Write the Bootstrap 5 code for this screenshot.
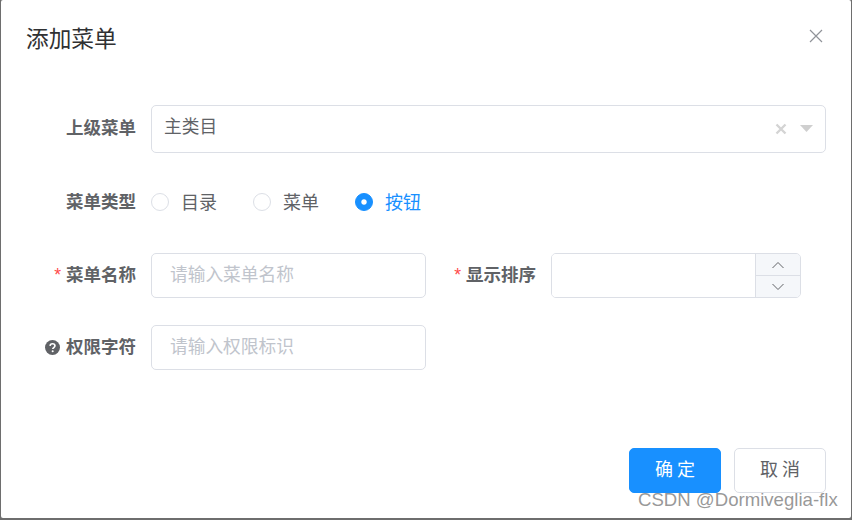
<!DOCTYPE html>
<html lang="zh-CN">
<head>
  <meta charset="UTF-8">
  <meta name="viewport" content="width=device-width, initial-scale=1.0">
  <title>添加菜单</title>
  <link rel="stylesheet" href="https://cdn.jsdelivr.net/npm/bootstrap@5.3.3/dist/css/bootstrap.min.css">
  <style>
    html, body { height: 520px; overflow: hidden; }
    body {
      background: #6e6e6e;
      padding: 0 1px 2px 1px;
      font-family: "Liberation Sans", "Noto Sans CJK SC", sans-serif;
      font-size: 17.5px;
      color: #606266;
    }
    .dlg { height: 518px; border: 0; border-radius: 2px; position: relative; background: #fff; }
    .dlg-head { height: 78px; padding: 0 25px; }
    .dlg-title { font-size: 22.7px; font-weight: 400; color: #303133; margin: 0; padding-top: 2px; }
    .dlg-close { background: none; border: 0; padding: 0; width: 16px; height: 16px; margin-right: 2px; margin-top: -6px; display: flex; }
    .dlg-form { padding: 27px 25px 0 25px; }
    .form-line { display: flex; align-items: center; }
    .form-line.line-select { height: 48px; margin-bottom: 25px; }
    .form-line.line-radio { height: 48px; margin-bottom: 27px; }
    .form-line.line-radio .lbl { padding-top: 2px; }
    .form-line.line-input { height: 45px; margin-bottom: 27px; }
    .lbl {
      width: 125px; flex: none; padding-right: 15px; margin: 0;
      display: flex; align-items: center; justify-content: flex-end; gap: 6px;
      font-weight: 700; color: #606266; line-height: 1;
    }
    .req { color: #ff4949; font-weight: 400; font-size: 17.5px; margin-right: -1px; }
    .sel-box {
      flex: 1; height: 48px; padding: 0 12px 0 13px;
      border: 1px solid #dcdfe6; border-radius: 5px; color: #606266;
    }
    .sel-text { margin-top: -3px; margin-left: -1px; font-size: 17.7px; }
    .sel-icons { gap: 13px; }
    .radio-item { display: flex; align-items: center; margin-right: 36px; gap: 12px; font-size: 18px; }
    .radio-item .form-check-input {
      width: 18px; height: 18px; margin: 0; border: 1px solid #dcdfe6; flex: none;
    }
    .radio-item .form-check-input:checked {
      background-color: #1890ff; border-color: #1890ff;
      background-image: radial-gradient(circle, #fff 2.2px, transparent 3.2px);
    }
    .radio-item .form-check-label { line-height: 1; padding-top: 2px; }
    .radio-item.on .form-check-label { color: #1890ff; }
    .txt-input {
      width: 275px; height: 45px; flex: none; padding: 0 18px;
      font-size: 17.7px; border: 1px solid #dcdfe6; border-radius: 5px; color: #606266;
    }
    .txt-input::placeholder { color: #c0c4cc; opacity: 1; }
    .num-box {
      width: 250px; height: 45px; flex: none; overflow: hidden;
      border: 1px solid #dcdfe6; border-radius: 5px;
    }
    .num-box input { border: 0; outline: 0; min-width: 0; }
    .num-side { width: 45px; flex: none; background: #f5f7fa; border-left: 1px solid #dcdfe6; }
    .num-btn { flex: 1; background: none; border: 0; padding: 0; display: flex; align-items: center; justify-content: center; }
    .num-btn + .num-btn { border-top: 1px solid #dcdfe6; }
    .dlg-foot { position: absolute; right: 25px; top: 448px; gap: 13px; }
    .foot-btn {
      width: 92px; height: 45px; padding: 0; font-size: 18px; letter-spacing: 4px;
      border-radius: 5px; text-indent: 4px;
    }
    .foot-ok { background: #1890ff; border: 1px solid #1890ff; color: #fff; }
    .foot-cancel { background: #fff; border: 1px solid #dcdfe6; color: #606266; }
    .wmark {
      position: absolute; left: 637px; top: 489px;
      font-family: "Liberation Sans", sans-serif; font-size: 18.6px; line-height: 22px;
      color: rgba(125, 125, 125, .8); white-space: nowrap; pointer-events: none;
    }
  </style>
</head>
<body>
  <div class="modal-content dlg">
    <div class="dlg-head d-flex align-items-center justify-content-between">
      <h5 class="dlg-title">添加菜单</h5>
      <button type="button" class="dlg-close" aria-label="Close">
        <svg width="16" height="16" viewBox="0 0 16 16"><path d="M2 2 14 14M14 2 2 14" stroke="#909399" stroke-width="1.2" fill="none"/></svg>
      </button>
    </div>

    <form class="dlg-form" onsubmit="return false;">
      <div class="form-line line-select">
        <label class="lbl">上级菜单</label>
        <div class="sel-box d-flex align-items-center justify-content-between">
          <span class="sel-text">主类目</span>
          <span class="sel-icons d-flex align-items-center">
            <svg width="12" height="12" viewBox="0 0 12 12"><path d="M1.500 1.500 10.500 10.500M10.500 1.500 1.500 10.500" stroke="#d4d4d4" stroke-width="2.400" fill="none"/></svg>
            <svg width="13" height="8" viewBox="0 0 13 8"><path d="M0 0H13L6.500 7Z" fill="#cfcfcf"/></svg>
          </span>
        </div>
      </div>

      <div class="form-line line-radio">
        <label class="lbl">菜单类型</label>
        <div class="d-flex">
          <div class="radio-item">
            <input class="form-check-input" type="radio" name="menuType" id="r1">
            <label class="form-check-label" for="r1">目录</label>
          </div>
          <div class="radio-item">
            <input class="form-check-input" type="radio" name="menuType" id="r2">
            <label class="form-check-label" for="r2">菜单</label>
          </div>
          <div class="radio-item on">
            <input class="form-check-input" type="radio" name="menuType" id="r3" checked>
            <label class="form-check-label" for="r3">按钮</label>
          </div>
        </div>
      </div>

      <div class="form-line line-input">
        <label class="lbl"><span class="req">*</span>菜单名称</label>
        <input type="text" class="txt-input" placeholder="请输入菜单名称">
        <label class="lbl"><span class="req">*</span>显示排序</label>
        <div class="num-box d-flex">
          <input type="text" class="flex-grow-1">
          <div class="num-side d-flex flex-column">
            <button type="button" class="num-btn" aria-label="增加">
              <svg width="14" height="8" viewBox="0 0 14 8"><path d="M1.500 7 7 1.500 12.500 7" stroke="#606266" stroke-width="1" fill="none"/></svg>
            </button>
            <button type="button" class="num-btn" aria-label="减少">
              <svg width="14" height="8" viewBox="0 0 14 8"><path d="M1.500 1 7 6.500 12.500 1" stroke="#606266" stroke-width="1" fill="none"/></svg>
            </button>
          </div>
        </div>
      </div>

      <div class="form-line line-input">
        <label class="lbl">
          <svg width="15" height="15" viewBox="0 0 16 16"><circle cx="8" cy="8" r="8" fill="#606266"/><path d="M5.400 6.300C5.500 4.800 6.600 4 8 4c1.500 0 2.600.9 2.600 2.200 0 1.900-2.300 1.800-2.300 3.500" stroke="#fff" stroke-width="1.800" fill="none"/><circle cx="8.200" cy="12" r="1.100" fill="#fff"/></svg>
          权限字符
        </label>
        <input type="text" class="txt-input" placeholder="请输入权限标识">
      </div>
    </form>

    <div class="dlg-foot d-flex">
      <button type="button" class="foot-btn foot-ok">确定</button>
      <button type="button" class="foot-btn foot-cancel">取消</button>
    </div>
    <div class="wmark">CSDN @Dormiveglia-flx</div>
  </div>
  <script src="https://cdn.jsdelivr.net/npm/bootstrap@5.3.3/dist/js/bootstrap.bundle.min.js"></script>
</body>
</html>
